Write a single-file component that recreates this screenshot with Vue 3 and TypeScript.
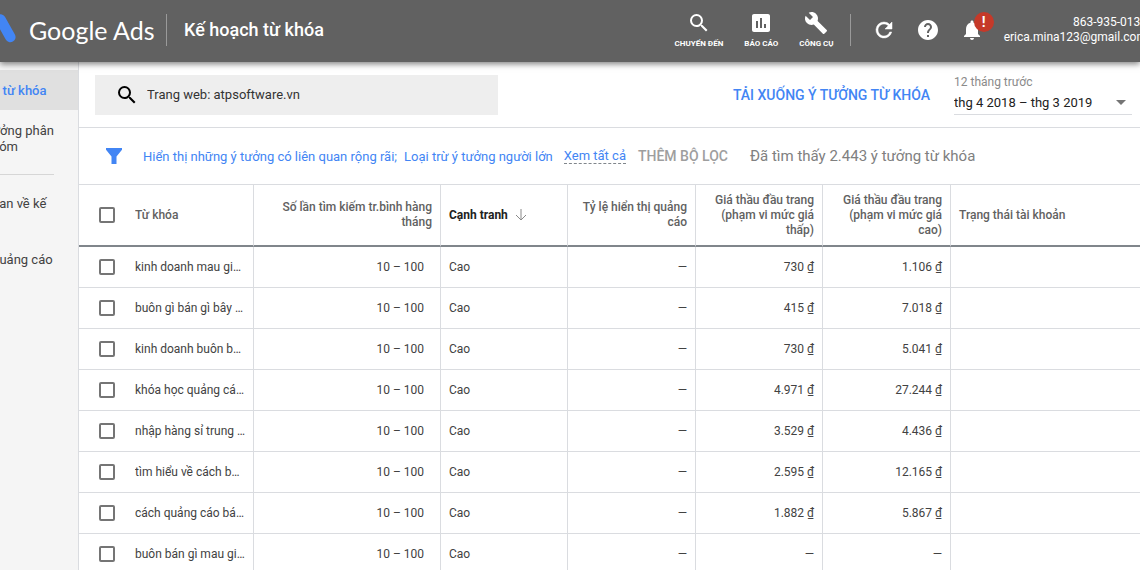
<script setup lang="ts">
import { ref } from 'vue'

interface KeywordRow {
  keyword: string
  low: string
  high: string
}

const source = ref('Trang web: atpsoftware.vn')
const period = ref('thg 4 2018 – thg 3 2019')
const selected = ref<string[]>([])

const rows: KeywordRow[] = [
  { keyword: 'kinh doanh mau giàu nhất', low: '730 ₫', high: '1.106 ₫' },
  { keyword: 'buôn gì bán gì bây giờ', low: '415 ₫', high: '7.018 ₫' },
  { keyword: 'kinh doanh buôn bán nhỏ', low: '730 ₫', high: '5.041 ₫' },
  { keyword: 'khóa học quảng cáo facebook', low: '4.971 ₫', high: '27.244 ₫' },
  { keyword: 'nhập hàng sỉ trung quốc', low: '3.529 ₫', high: '4.436 ₫' },
  { keyword: 'tìm hiểu về cách buôn bán', low: '2.595 ₫', high: '12.165 ₫' },
  { keyword: 'cách quảng cáo bán hàng', low: '1.882 ₫', high: '5.867 ₫' },
  { keyword: 'buôn bán gì mau giàu nhất', low: '—', high: '—' },
]

function toggleAll(event: Event) {
  const on = (event.target as HTMLInputElement).checked
  selected.value = on ? rows.map((r) => r.keyword) : []
}
</script>

<template>
  <div class="page">
    <header class="topbar">
      <svg class="mark" width="16" height="32" viewBox="0 0 16 32" aria-hidden="true">
        <path d="M.5 5.500 L10.300 23" stroke="#4285f4" stroke-width="10.500" stroke-linecap="round" />
      </svg>
      <span class="brand">Google Ads</span>
      <span class="rule"></span>
      <h1>Kế hoạch từ khóa</h1>

      <div class="tools">
        <button type="button" class="tool">
          <svg width="24" height="24" viewBox="0 0 24 24"><path d="M15.500 14h-.79l-.28-.27A6.471 6.471 0 0 0 16 9.500 6.500 6.500 0 1 0 9.500 16c1.610 0 3.090-.59 4.230-1.570l.27.28v.79l5 4.990L20.490 19l-4.990-5zm-6 0C7.010 14 5 11.990 5 9.500S7.010 5 9.500 5 14 7.010 14 9.500 11.990 14 9.500 14z" /></svg>
          <span>CHUYỂN ĐẾN</span>
        </button>
        <button type="button" class="tool">
          <svg width="24" height="24" viewBox="0 0 24 24"><path d="M19 3H5c-1.100 0-2 .9-2 2v14c0 1.100.9 2 2 2h14c1.100 0 2-.9 2-2V5c0-1.100-.9-2-2-2zM9 17H7v-7h2v7zm4 0h-2V7h2v10zm4 0h-2v-4h2v4z" /></svg>
          <span>BÁO CÁO</span>
        </button>
        <button type="button" class="tool">
          <svg width="24" height="24" viewBox="0 0 24 24"><path d="M22.700 19l-9.100-9.100c.9-2.300.4-5-1.500-6.900-2-2-5-2.400-7.400-1.300L9 6 6 9 1.600 4.700C.4 7.100.9 10.100 2.900 12.100c1.900 1.900 4.600 2.400 6.900 1.500l9.100 9.100c.4.4 1 .4 1.400 0l2.300-2.300c.5-.4.5-1.100.1-1.400z" /></svg>
          <span>CÔNG CỤ</span>
        </button>
      </div>
      <span class="rule rule-tools"></span>
      <div class="actions">
        <button type="button" aria-label="Làm mới">
          <svg width="24" height="24" viewBox="0 0 24 24"><path stroke="#fff" stroke-width=".5" d="M17.650 6.350A7.958 7.958 0 0 0 12 4a8 8 0 1 0 7.730 10h-2.080A5.990 5.990 0 0 1 12 18c-3.310 0-6-2.690-6-6s2.690-6 6-6c1.660 0 3.140.69 4.220 1.780L13 11h7V4l-2.350 2.350z" /></svg>
        </button>
        <button type="button" aria-label="Trợ giúp">
          <svg width="24" height="24" viewBox="0 0 24 24"><path d="M12 2C6.480 2 2 6.480 2 12s4.480 10 10 10 10-4.480 10-10S17.520 2 12 2zm1 17h-2v-2h2v2zm2.070-7.750l-.9.92C13.450 12.900 13 13.500 13 15h-2v-.5c0-1.100.45-2.100 1.170-2.830l1.240-1.260c.37-.36.59-.86.59-1.410 0-1.100-.9-2-2-2s-2 .9-2 2H8c0-2.210 1.790-4 4-4s4 1.790 4 4c0 .88-.36 1.680-.93 2.250z" /></svg>
        </button>
        <button type="button" class="bell" aria-label="Thông báo">
          <svg width="24" height="24" viewBox="0 0 24 24"><path d="M12 22c1.100 0 2-.9 2-2h-4c0 1.100.9 2 2 2zm6-6v-5c0-3.070-1.630-5.640-4.500-6.320V4c0-.83-.67-1.500-1.500-1.500s-1.500.67-1.500 1.500v.68C7.640 5.360 6 7.920 6 11v5l-2 2v1h16v-1l-2-2z" /></svg>
          <span class="badge">!</span>
        </button>
      </div>
      <div class="account">
        <span>863-935-0130</span>
        <span>erica.mina123@gmail.com</span>
      </div>
    </header>

    <div class="body">
      <nav class="side">
        <a href="#" class="current"><span>g từ khóa</span></a>
        <a href="#" class="groups"><span>ưởng phân<br />hóm</span></a>
        <hr />
        <a href="#"><span>uan về kế</span></a>
        <a href="#" class="last"><span>quảng cáo</span></a>
      </nav>

      <main>
        <section class="searchbar">
          <label class="search">
            <svg width="24" height="24" viewBox="0 0 24 24" aria-hidden="true"><path d="M15.500 14h-.79l-.28-.27A6.471 6.471 0 0 0 16 9.500 6.500 6.500 0 1 0 9.500 16c1.610 0 3.090-.59 4.230-1.570l.27.28v.79l5 4.990L20.490 19l-4.990-5zm-6 0C7.010 14 5 11.990 5 9.500S7.010 5 9.500 5 14 7.010 14 9.500 11.990 14 9.500 14z" /></svg>
            <input v-model="source" type="text" aria-label="Trang web" />
          </label>
          <button type="button" class="download">TẢI XUỐNG Ý TƯỞNG TỪ KHÓA</button>
          <div class="period">
            <label for="period">12 tháng trước</label>
            <div class="pick">
              <select id="period" v-model="period">
                <option>thg 4 2018 – thg 3 2019</option>
              </select>
              <svg width="10" height="5" viewBox="0 0 10 5" aria-hidden="true"><path d="M0 0h10L5 5z" /></svg>
            </div>
          </div>
        </section>

        <section class="filters">
          <svg width="18" height="18" viewBox="0 0 18 18" aria-hidden="true"><path d="M1 1h16v1.800L11.500 9.600V17h-5V9.600L1 2.800z" /></svg>
          <a href="#" class="first">Hiển thị những ý tưởng có liên quan rộng rãi;</a>
          <a href="#" class="second">Loại trừ ý tưởng người lớn</a>
          <a href="#" class="all">Xem tất cả</a>
          <button type="button">THÊM BỘ LỌC</button>
          <p>Đã tìm thấy 2.443 ý tưởng từ khóa</p>
        </section>

        <table>
          <colgroup>
            <col class="c-check" />
            <col class="c-key" />
            <col class="c-vol" />
            <col class="c-mid" />
            <col class="c-wide" />
            <col class="c-mid" />
            <col class="c-wide" />
            <col />
          </colgroup>
          <thead>
            <tr>
              <th class="check">
                <input
                  type="checkbox"
                  aria-label="Chọn tất cả"
                  :checked="selected.length === rows.length"
                  @change="toggleAll"
                />
              </th>
              <th class="key">Từ khóa</th>
              <th class="num">Số lần tìm kiếm tr.bình hàng tháng</th>
              <th class="sorted">
                <span>Cạnh tranh<svg width="12" height="12" viewBox="0 0 12 12"><path d="M6 0v11M1 6l5 5 5-5" /></svg></span>
              </th>
              <th class="num">Tỷ lệ hiển thị quảng cáo</th>
              <th class="num">Giá thầu đầu trang (phạm vi mức giá thấp)</th>
              <th class="num">Giá thầu đầu trang (phạm vi mức giá cao)</th>
              <th>Trạng thái tài khoản</th>
            </tr>
          </thead>
          <tbody>
            <tr v-for="row in rows" :key="row.keyword">
              <td class="check">
                <input v-model="selected" type="checkbox" :value="row.keyword" :aria-label="row.keyword" />
              </td>
              <td class="key">{{ row.keyword }}</td>
              <td class="num volume">10 – 100</td>
              <td>Cao</td>
              <td class="num">—</td>
              <td class="num">{{ row.low }}</td>
              <td class="num">{{ row.high }}</td>
              <td></td>
            </tr>
          </tbody>
        </table>
      </main>
    </div>
  </div>
</template>

<style>
body {
  margin: 0;
  overflow: hidden;
}
</style>

<style scoped>
.page {
  display: flex;
  flex-direction: column;
  height: 100vh;
  overflow: hidden;
  background: #fff;
  color: #424242;
  font-family: Roboto, 'Noto Sans', sans-serif;
  font-size: 13px;
}

button {
  padding: 0;
  border: 0;
  background: none;
  font: inherit;
  color: inherit;
  white-space: nowrap;
  cursor: pointer;
}

a {
  color: inherit;
  text-decoration: none;
  white-space: nowrap;
}

svg {
  flex: none;
  display: block;
}

.topbar {
  position: relative;
  z-index: 1;
  flex: none;
  display: flex;
  align-items: center;
  height: 62px;
  padding-bottom: 3px;
  box-sizing: border-box;
  background: #616161;
  box-shadow: 0 2px 6px rgba(0, 0, 0, 0.5);
  color: #fff;
}

.topbar button svg {
  fill: #fff;
}

.mark {
  fill: none;
}

.brand {
  margin-left: 13px;
  width: 124px;
  font-family: Lato, Roboto, sans-serif;
  font-size: 25px;
  white-space: nowrap;
}

.rule {
  flex: none;
  margin-left: 13px;
  width: 1px;
  height: 32px;
  background: #9a9a9a;
}

h1 {
  margin: 0 0 0 17px;
  font-size: 18px;
  font-weight: 500;
  white-space: nowrap;
}

.tools {
  display: flex;
  gap: 21px;
  margin-left: auto;
  padding-top: 2px;
}

.tool {
  display: flex;
  flex-direction: column;
  align-items: center;
  gap: 3px;
  font-size: 8px;
  font-weight: 700;
  line-height: 12px;
}

.rule-tools {
  margin: 0 21px 0 16px;
}

.actions {
  display: flex;
  gap: 20px;
}

.bell {
  position: relative;
}

.badge {
  position: absolute;
  left: 14px;
  top: -6px;
  width: 20px;
  height: 20px;
  border-radius: 50%;
  background: #c53929;
  font-size: 14px;
  font-weight: 700;
  line-height: 20px;
  text-align: center;
}

.account {
  flex: none;
  display: flex;
  flex-direction: column;
  align-items: flex-end;
  margin: 0 -7px 0 20px;
  font-size: 12px;
  line-height: 15px;
}

.body {
  flex: 1;
  display: flex;
  min-height: 0;
}

.side {
  flex: none;
  width: 78px;
  padding-top: 8px;
  box-sizing: border-box;
  overflow: hidden;
  background: #f5f5f5;
  line-height: 16px;
}

.side a {
  display: block;
  padding: 13px 0 11px;
}

.side span {
  display: block;
  margin-left: -8px;
}

.side .current {
  background: #e0e0e0;
  color: #4285f4;
  font-weight: 500;
}

.side .last {
  margin-top: 16px;
}

.side hr {
  margin: 8px 24px 8px 0;
  border: 0;
  border-top: 1px solid #d6d6d6;
}

main {
  flex: 1;
  min-width: 0;
  border-left: 1px solid #dadce0;
}

.searchbar {
  display: flex;
  align-items: center;
  height: 65px;
  padding: 0 8px 0 16px;
  border-bottom: 1px solid #dadce0;
}

.search {
  display: flex;
  align-items: center;
  gap: 8px;
  width: 403px;
  height: 40px;
  padding-left: 20px;
  box-sizing: border-box;
  background: #eee;
}

.search input {
  flex: 1;
  min-width: 0;
  border: 0;
  padding: 0;
  background: none;
  color: #333;
  font: inherit;
}

.download {
  margin-left: auto;
  color: #4285f4;
  font-size: 14px;
  font-weight: 500;
}

.period {
  width: 178px;
  margin-left: 24px;
  border-bottom: 1px solid #dadce0;
}

.period label {
  display: block;
  color: #8a8a8a;
  font-size: 12px;
  line-height: 16px;
}

.pick {
  display: flex;
  align-items: center;
  padding-right: 6px;
}

.pick svg {
  fill: #757575;
}

select {
  flex: 1;
  height: 24px;
  padding: 0;
  border: 0;
  appearance: none;
  background: none;
  color: #212121;
  font: inherit;
}

.filters {
  display: flex;
  align-items: center;
  height: 56px;
  padding-left: 26px;
  border-bottom: 1px solid #dadce0;
  color: #4285f4;
}

.filters svg {
  fill: #4285f4;
}

.first {
  margin-left: 20px;
}

.second {
  margin-left: 7px;
}

.all {
  margin-left: 11px;
  border-bottom: 1px dashed #80868b;
}

.filters button {
  margin-left: 12px;
  color: #9e9e9e;
  font-size: 14px;
  font-weight: 500;
}

.filters p {
  margin: 0 0 0 22px;
  color: #808080;
  font-size: 15px;
  white-space: nowrap;
}

table {
  width: 100%;
  table-layout: fixed;
  border-collapse: separate;
  border-spacing: 0;
  font-size: 12px;
}

.c-check {
  width: 56px;
}

.c-key {
  width: 119px;
}

.c-vol {
  width: 187px;
}

.c-mid {
  width: 127px;
}

.c-wide {
  width: 128px;
}

th,
td {
  box-sizing: border-box;
  padding: 0 8px;
  border-right: 1px solid #dadce0;
  border-bottom: 1px solid #dadce0;
  text-align: left;
}

th {
  height: 62px;
  border-bottom: 2px solid #80868b;
  color: #616161;
  font-weight: 500;
  line-height: 15px;
}

td {
  height: 41px;
}

tr > :last-child {
  border-right: 0;
}

.check {
  padding: 0 0 0 20px;
  border-right: 0;
}

.key {
  padding: 0 7px 0 0;
  overflow: hidden;
  text-overflow: ellipsis;
  white-space: nowrap;
}

.num {
  text-align: right;
}

.volume {
  padding-right: 16px;
}

.sorted {
  color: #212121;
  font-weight: 700;
}

.sorted span {
  display: flex;
  align-items: center;
  gap: 7px;
}

.sorted svg {
  fill: none;
  stroke: #8a8a8a;
}

input[type='checkbox'] {
  display: block;
  width: 16px;
  height: 16px;
  margin: 0;
  box-sizing: border-box;
  appearance: none;
  border: 2px solid #757575;
  border-radius: 2px;
  background: #fff;
}

input[type='checkbox']:checked {
  border-color: #4285f4;
  background: #4285f4;
}
</style>
